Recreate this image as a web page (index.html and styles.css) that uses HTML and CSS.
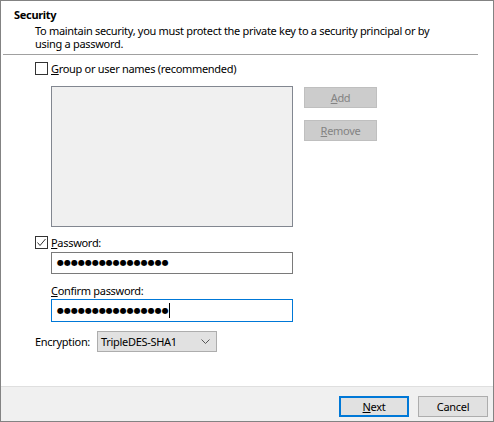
FILE: index.html
```html
<!DOCTYPE html>
<html lang="en">
<head>
<meta charset="utf-8">
<title>Security</title>
<link rel="stylesheet" href="styles.css">
</head>
<body>
<div class="window">
  <div class="main">
    <div class="header">
      <div class="title">Security</div>
      <p class="desc">To maintain security, you must protect the private key to a security principal or by using a password.</p>
    </div>
    <div class="sep"></div>
    <div class="body">
      <label class="check-row">
        <span class="checkbox"></span>
        <span class="check-label"><u>G</u>roup or user names (recommended)</span>
      </label>
      <div class="list-row">
        <div class="listbox"></div>
        <div class="side-buttons">
          <button class="btn disabled"><u>A</u>dd</button>
          <button class="btn disabled"><u>R</u>emove</button>
        </div>
      </div>
      <label class="check-row pw-row">
        <span class="checkbox checked">
          <svg width="11" height="11" viewBox="0 0 11 11"><polyline points="1.5,5.5 4,8.5 9.5,2" fill="none" stroke="#333" stroke-width="1"/></svg>
        </span>
        <span class="check-label"><u>P</u>assword:</span>
      </label>
      <div class="textbox pw1"><span class="dots">●●●●●●●●●●●●●●●●</span></div>
      <div class="field-label"><u>C</u>onfirm password:</div>
      <div class="textbox focused"><span class="dots">●●●●●●●●●●●●●●●●</span><span class="caret"></span></div>
      <div class="enc-row">
        <span class="enc-label">Encryption:</span>
        <div class="combo">
          <span class="combo-text">TripleDES-SHA1</span>
          <svg class="chev" width="9" height="5" viewBox="0 0 9 5"><polyline points="0.5,0.5 4.5,4.5 8.5,0.5" fill="none" stroke="#555" stroke-width="1"/></svg>
        </div>
      </div>
    </div>
  </div>
  <div class="footer">
    <button class="btn default"><u>N</u>ext</button>
    <button class="btn">Cancel</button>
  </div>
</div>
</body>
</html>
```
FILE: styles.css
```css
* { box-sizing: border-box; }
html, body { margin: 0; padding: 0; background: #fff; }
body {
  font-family: "Noto Sans", "Liberation Sans", sans-serif;
  font-size: 11px;
  letter-spacing: -0.3px;
  color: #000;
}
.window {
  width: 494px;
  height: 422px;
  border: 1px solid #838383;
  display: flex;
  flex-direction: column;
  background: #fff;
}
.main {
  flex: 1;
  padding-top: 7px;
  display: flex;
  flex-direction: column;
}
.header { padding-left: 13px; }
.title {
  font-weight: bold;
  line-height: 13px;
  height: 13px;
}
.desc {
  margin: 3px 0 0 21px;
  line-height: 13px;
  width: 420px;
}
.sep {
  margin: 4px 0 0 2px;
  width: 475px;
  height: 1px;
  background: #a0a0a0;
}
.body {
  padding-left: 34px;
  display: flex;
  flex-direction: column;
}
.check-row {
  display: flex;
  align-items: center;
  gap: 3px;
  height: 13px;
  line-height: 13px;
  margin-top: 7px;
}
.checkbox {
  width: 13px;
  height: 13px;
  border: 1px solid #333;
  background: #fff;
  display: flex;
  align-items: center;
  justify-content: center;
  flex: none;
}
.list-row {
  display: flex;
  gap: 11px;
  margin: 11px 0 0 16px;
  align-items: flex-start;
}
.listbox {
  width: 242px;
  height: 141px;
  border: 1px solid #828790;
  background: #f0f0f0;
}
.side-buttons {
  display: flex;
  flex-direction: column;
  gap: 12px;
  margin-top: 1px;
}
.btn {
  font: inherit;
  letter-spacing: inherit;
  width: 73px;
  height: 21px;
  padding: 0;
  border: 1px solid #adadad;
  background: #e1e1e1;
  color: #000;
  line-height: 19px;
  text-align: center;
}
.btn.disabled {
  background: #cccccc;
  border-color: #bfbfbf;
  color: #838383;
}
.pw-row { margin-top: 9px; }
.textbox {
  margin: 3px 0 0 16px;
  width: 242px;
  height: 22px;
  border: 1px solid #7a7a7a;
  background: #fff;
  display: flex;
  align-items: center;
  padding-left: 5px;
}
.textbox.focused {
  border-color: #0078d7;
  margin-top: 2px;
  height: 23px;
}
.dots {
  font-family: "DejaVu Sans", sans-serif;
  font-size: 8px;
  letter-spacing: 0;
  line-height: 10px;
}
.caret {
  width: 1px;
  height: 15px;
  background: #000;
  margin-left: 0;
}
.field-label {
  margin: 10px 0 0 16px;
  line-height: 13px;
  height: 13px;
}
.enc-row {
  display: flex;
  align-items: center;
  margin-top: 9px;
  gap: 7px;
}
.enc-label { line-height: 13px; }
.combo {
  width: 120px;
  height: 21px;
  border: 1px solid #adadad;
  background: #e1e1e1;
  display: flex;
  align-items: center;
  justify-content: space-between;
  padding: 0 6px 0 3px;
}
.chev { display: block; }
.footer {
  height: 35px;
  border-top: 1px solid #dfdfdf;
  background: #f0f0f0;
  display: flex;
  justify-content: flex-end;
  align-items: flex-start;
  padding: 9px 5px 0 0;
  gap: 9px;
}
.footer .btn { width: 70px; }
.btn.default {
  border: 2px solid #0078d7;
  line-height: 17px;
}
```
